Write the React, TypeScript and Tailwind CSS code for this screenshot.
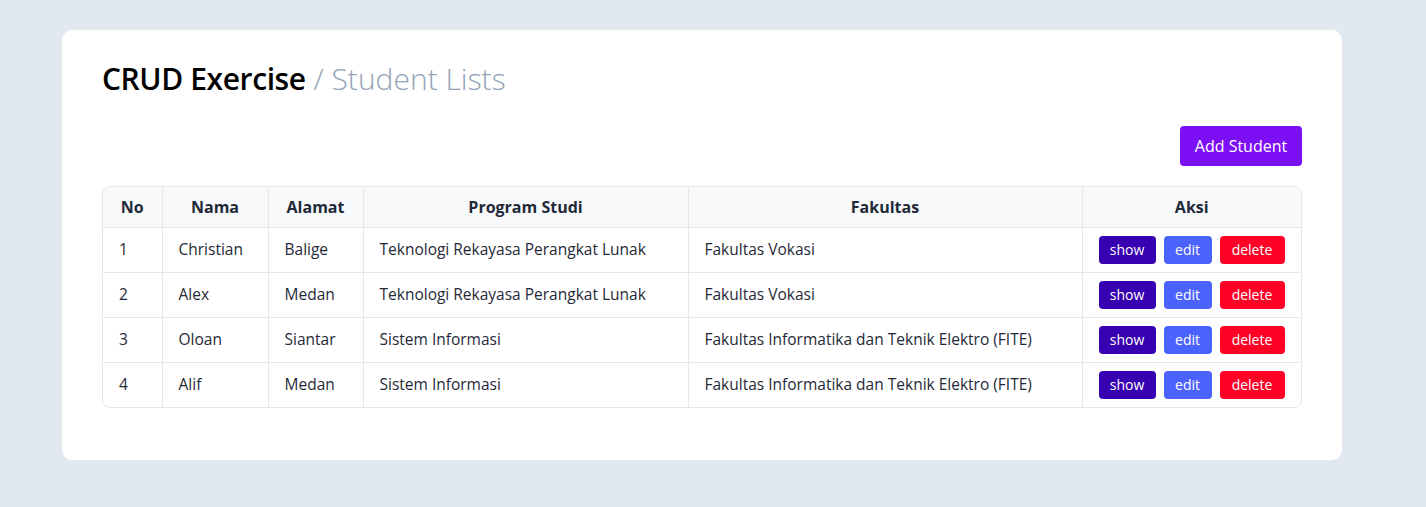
const students = [
  { no: 1, nama: 'Christian', alamat: 'Balige', prodi: 'Teknologi Rekayasa Perangkat Lunak', fakultas: 'Fakultas Vokasi' },
  { no: 2, nama: 'Alex', alamat: 'Medan', prodi: 'Teknologi Rekayasa Perangkat Lunak', fakultas: 'Fakultas Vokasi' },
  { no: 3, nama: 'Oloan', alamat: 'Siantar', prodi: 'Sistem Informasi', fakultas: 'Fakultas Informatika dan Teknik Elektro (FITE)' },
  { no: 4, nama: 'Alif', alamat: 'Medan', prodi: 'Sistem Informasi', fakultas: 'Fakultas Informatika dan Teknik Elektro (FITE)' },
];

const App = () => {
  return (
    <div className="min-h-screen bg-[#e2e8f0] pt-[30px] pl-[62px] font-['Open_Sans',sans-serif]">
      <div className="w-[1280px] h-[430px] bg-white rounded-[10px] px-10 pt-[27px]">
        {/* Title */}
        <h1 className="text-[30px] leading-[44px] tracking-[-0.4px]">
          <span className="font-semibold text-black">CRUD Exercise</span>
          <span className="font-light text-[#94a3b8] tracking-[0px]"> / Student Lists</span>
        </h1>

        <div className="flex justify-end mt-[25px]">
          <button className="h-10 w-[122px] rounded bg-[#7c0ff4] text-white text-[16px]">
            Add Student
          </button>
        </div>

        {/* Table */}
        <div className="mt-5 border border-[#e5e7eb] rounded-lg overflow-hidden">
          <table className="w-full border-collapse text-[15.5px] text-[#1f2937] table-fixed">
            <colgroup>
              <col className="w-[59px]" />
              <col className="w-[106px]" />
              <col className="w-[95px]" />
              <col className="w-[325px]" />
              <col className="w-[394px]" />
              <col />
            </colgroup>
            <thead>
              <tr className="bg-[#f8f9fb] h-[40px] font-bold text-[16px]">
                <th className="border-r border-[#e5e7eb]">No</th>
                <th className="border-r border-[#e5e7eb]">Nama</th>
                <th className="border-r border-[#e5e7eb]">Alamat</th>
                <th className="border-r border-[#e5e7eb]">Program Studi</th>
                <th className="border-r border-[#e5e7eb]">Fakultas</th>
                <th>Aksi</th>
              </tr>
            </thead>
            <tbody>
              {students.map((s) => (
                <tr key={s.no} className="h-[45px] border-t border-[#e5e7eb]">
                  <td className="px-4 border-r border-[#e5e7eb]">{s.no}</td>
                  <td className="px-4 border-r border-[#e5e7eb]">{s.nama}</td>
                  <td className="px-4 border-r border-[#e5e7eb]">{s.alamat}</td>
                  <td className="px-4 border-r border-[#e5e7eb]">{s.prodi}</td>
                  <td className="px-4 border-r border-[#e5e7eb]">{s.fakultas}</td>
                  <td className="px-4">
                    <div className="flex gap-2 text-[14px] text-white">
                      <button className="h-7 w-[57px] rounded bg-[#3700b0]">show</button>
                      <button className="h-7 w-12 rounded bg-[#4c62fc]">edit</button>
                      <button className="h-7 w-[65px] rounded bg-[#ff0026]">delete</button>
                    </div>
                  </td>
                </tr>
              ))}
            </tbody>
          </table>
        </div>
      </div>
    </div>
  );
};

export default App;
